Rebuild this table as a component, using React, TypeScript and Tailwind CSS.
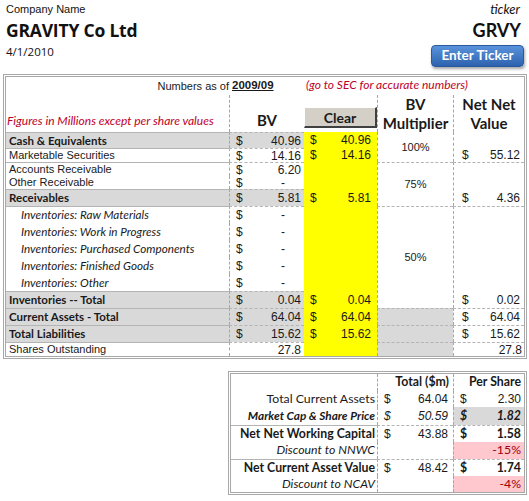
import React from 'react';

const arial = "font-['Liberation_Sans',Arial,sans-serif]";
const cal = "font-['Lato','Open_Sans',sans-serif]";

type Row = {
    pos: string;
    label: string;
    kind: 'bold' | 'plain' | 'inv';
    bv: string;
    line: boolean;
};

const rows: Row[] = [
    { pos: 'row-start-3', label: 'Cash & Equivalents', kind: 'bold', bv: '40.96', line: true },
    { pos: 'row-start-4', label: 'Marketable Securities', kind: 'plain', bv: '14.16', line: true },
    { pos: 'row-start-5', label: 'Accounts Receivable', kind: 'plain', bv: '6.20', line: true },
    { pos: 'row-start-6', label: 'Other Receivable', kind: 'plain', bv: '-', line: false },
    { pos: 'row-start-7', label: 'Receivables', kind: 'bold', bv: '5.81', line: true },
    { pos: 'row-start-8', label: 'Inventories: Raw Materials', kind: 'inv', bv: '-', line: true },
    { pos: 'row-start-9', label: 'Inventories: Work in Progress', kind: 'inv', bv: '-', line: false },
    { pos: 'row-start-10', label: 'Inventories: Purchased Components', kind: 'inv', bv: '-', line: false },
    { pos: 'row-start-11', label: 'Inventories: Finished Goods', kind: 'inv', bv: '-', line: false },
    { pos: 'row-start-12', label: 'Inventories: Other', kind: 'inv', bv: '-', line: false },
    { pos: 'row-start-13', label: 'Inventories -- Total', kind: 'bold', bv: '0.04', line: true },
    { pos: 'row-start-14', label: 'Current Assets - Total', kind: 'bold', bv: '64.04', line: true },
    { pos: 'row-start-15', label: 'Total Liabilities', kind: 'bold', bv: '15.62', line: true },
];

// "$" on the left, amount on the right, like Excel's accounting format
function Money({ v, cls }: { v: string; cls: string }) {
    return (
        <div className={`flex items-center justify-between ${cls}`}>
            <span>$</span>
            <span className={v === '-' ? 'pr-[16px]' : ''}>{v}</span>
        </div>
    );
}

function Header() {
    return (
        <div className="h-[74px] flex justify-between px-[6px] pt-[1px] text-[#111]">
            <div>
                <div className={`text-[11px] leading-[16px] ${arial}`}>Company Name</div>
                <div className="text-[17.5px] leading-[26px] font-bold tracking-[-0.2px] font-['Open_Sans',sans-serif]">GRAVITY Co Ltd</div>
                <div className="text-[11.5px] leading-[16px] mt-[1px] font-['Open_Sans',sans-serif]">4/1/2010</div>
            </div>
            <div className={`flex flex-col items-end ${cal} pr-[2px]`}>
                <div className="text-[13px] leading-[16px] italic pr-[1px]">ticker</div>
                <div className="text-[18px] leading-[26px] font-bold">GRVY</div>
                <button className="mt-[2px] mr-[-3px] h-[22px] w-[93px] rounded-[4px] border border-[#2a5a9e] bg-gradient-to-b from-[#5a93dc] to-[#2e62ae] text-white text-[13.5px] font-bold leading-none shadow-[1px_2px_3px_rgba(0,0,0,0.35)]">
                    Enter Ticker
                </button>
            </div>
        </div>
    );
}

function MainTable() {
    return (
        <div className="ml-[3px] w-[524px] border-[3px] border-double border-[#a8a8a8] text-[#1a1a1a]">
            <div className="grid grid-cols-[223px_75px_73px_76px_71px] grid-rows-[18px_37px_16px_14px_14px_13px_17px_17px_17px_17px_17px_17px_17px_17px_17px_14px]">
                {/* title row */}
                <div className={`col-start-1 row-start-1 flex items-end justify-end pb-[1px] text-[11px] ${arial}`}>Numbers as of</div>
                <div className={`col-start-2 row-start-1 flex items-end pl-[3px] pb-[1px] text-[11.5px] font-bold underline ${arial}`}>2009/09</div>
                <div className={`col-start-3 col-span-3 row-start-1 flex items-end pl-[2px] pb-[1px] text-[12px] italic text-[#c0002a] ${cal}`}>
                    (go to SEC for accurate numbers)
                </div>

                {/* column headers */}
                <div className={`col-start-1 row-start-2 flex items-end pb-[2px] pl-[1px] text-[12px] italic text-[#c0002a] ${cal}`}>
                    Figures in Millions except per share values
                </div>
                <div className={`col-start-2 row-start-2 flex items-end justify-center pb-[1px] border-l border-dashed border-[#a6a6a6] text-[15px] font-bold ${cal}`}>BV</div>
                <div className="col-start-3 row-start-2 pt-[12px]">
                    <div className={`h-[21px] flex items-center justify-center bg-[#d4d0c8] border-t border-l border-t-white border-l-white border-r-2 border-b-2 border-r-[#404040] border-b-[#404040] text-[14px] font-bold ${cal}`}>
                        Clear
                    </div>
                </div>
                <div className={`col-start-4 row-start-2 flex flex-col items-center justify-center border-l border-dashed border-[#a6a6a6] text-[15px] leading-[19px] font-bold ${cal}`}>
                    <span>BV</span>
                    <span>Multiplier</span>
                </div>
                <div className={`col-start-5 row-start-2 flex flex-col items-center justify-center border-l border-dashed border-[#a6a6a6] text-[15px] leading-[19px] font-bold ${cal}`}>
                    <span>Net Net</span>
                    <span>Value</span>
                </div>

                {/* labels and BV */}
                {rows.map(row => (
                    <React.Fragment key={row.label}>
                        <div
                            className={`col-start-1 ${row.pos} flex items-center ${row.line ? 'border-t border-[#b4b4b4]' : ''} ${
                                row.kind === 'bold'
                                    ? `bg-[#d9d9d9] pl-[3px] text-[11.5px] font-bold ${cal}`
                                    : row.kind === 'inv'
                                    ? `pl-[15px] text-[11.7px] italic ${cal}`
                                    : `pl-[3px] text-[11px] ${arial}`
                            }`}
                        >
                            {row.label}
                        </div>
                        <div
                            className={`col-start-2 ${row.pos} border-l border-dashed border-[#a6a6a6] ${row.line ? 'border-t border-t-[#b4b4b4] border-t-solid' : ''} ${
                                row.kind === 'bold' ? 'bg-[#d9d9d9]' : ''
                            }`}
                        >
                            <Money v={row.bv} cls={`h-full pl-[6px] pr-[3px] text-[12px] ${arial}`} />
                        </div>
                    </React.Fragment>
                ))}
                <div className={`col-start-1 row-start-16 flex items-center pl-[3px] border-t border-[#b4b4b4] text-[11px] ${arial}`}>Shares Outstanding</div>
                <div className={`col-start-2 row-start-16 flex items-center justify-end pr-[3px] border-l border-dashed border-[#a6a6a6] border-t border-t-[#b4b4b4] text-[12px] ${arial}`}>27.8</div>

                {/* yellow "Clear" column */}
                <div className="col-start-3 row-start-3 row-span-14 bg-[#ffff00]" />
                <Money v="40.96" cls={`col-start-3 row-start-3 pl-[6px] pr-[6px] text-[12px] ${arial}`} />
                <Money v="14.16" cls={`col-start-3 row-start-4 pl-[6px] pr-[6px] text-[12px] ${arial}`} />
                <Money v="5.81" cls={`col-start-3 row-start-7 pl-[6px] pr-[6px] text-[12px] ${arial}`} />
                <Money v="0.04" cls={`col-start-3 row-start-13 pl-[6px] pr-[6px] text-[12px] ${arial}`} />
                <Money v="64.04" cls={`col-start-3 row-start-14 pl-[6px] pr-[6px] text-[12px] ${arial}`} />
                <Money v="15.62" cls={`col-start-3 row-start-15 pl-[6px] pr-[6px] text-[12px] ${arial}`} />

                {/* BV multiplier */}
                <div className={`col-start-4 row-start-3 row-span-2 flex items-center justify-center border-l border-dashed border-[#a6a6a6] text-[11px] ${arial}`}>100%</div>
                <div className={`col-start-4 row-start-5 row-span-3 flex items-center justify-center border-l border-dashed border-[#a6a6a6] border-t border-t-[#b4b4b4] text-[11px] ${arial}`}>75%</div>
                <div className={`col-start-4 row-start-8 row-span-6 flex items-center justify-center border-l border-dashed border-[#a6a6a6] border-t border-t-[#b4b4b4] text-[11px] ${arial}`}>50%</div>
                <div className="col-start-4 row-start-14 bg-[#d9d9d9] border-l border-dashed border-[#a6a6a6] border-t border-t-[#b4b4b4]" />
                <div className="col-start-4 row-start-15 bg-[#d9d9d9] border-l border-dashed border-[#a6a6a6] border-t border-t-[#b4b4b4]" />
                <div className="col-start-4 row-start-16 bg-[#d9d9d9] border-l border-dashed border-[#a6a6a6] border-t border-t-[#b4b4b4]" />

                {/* net net value */}
                <div className="col-start-5 row-start-3 row-span-2 flex items-end border-l border-dashed border-[#a6a6a6]">
                    <Money v="55.12" cls={`w-full h-[14px] pl-[8px] pr-[4px] text-[12px] ${arial}`} />
                </div>
                <div className="col-start-5 row-start-5 row-span-3 flex items-end border-l border-dashed border-[#a6a6a6] border-t border-t-[#b4b4b4]">
                    <Money v="4.36" cls={`w-full h-[17px] pl-[8px] pr-[4px] text-[12px] ${arial}`} />
                </div>
                <div className="col-start-5 row-start-8 row-span-6 flex items-end border-l border-dashed border-[#a6a6a6] border-t border-t-[#b4b4b4]">
                    <Money v="0.02" cls={`w-full h-[17px] pl-[8px] pr-[4px] text-[12px] ${arial}`} />
                </div>
                <div className="col-start-5 row-start-14 border-l border-dashed border-[#a6a6a6] border-t border-t-[#b4b4b4]">
                    <Money v="64.04" cls={`h-full pl-[8px] pr-[4px] text-[12px] ${arial}`} />
                </div>
                <div className="col-start-5 row-start-15 border-l border-dashed border-[#a6a6a6] border-t border-t-[#b4b4b4]">
                    <Money v="15.62" cls={`h-full pl-[8px] pr-[4px] text-[12px] ${arial}`} />
                </div>
                <div className={`col-start-5 row-start-16 flex items-center justify-end pr-[2px] border-l border-dashed border-[#a6a6a6] border-t border-t-[#b4b4b4] text-[12px] ${arial}`}>27.8</div>
            </div>
        </div>
    );
}

function Summary() {
    const cell = 'border-l border-dashed border-[#a6a6a6]';
    return (
        <div className={`ml-[228px] mt-[12px] w-[299px] border-[3px] border-double border-[#a8a8a8] text-[#1a1a1a] ${cal} text-[12.3px]`}>
            <div className="grid grid-cols-[146px_76px_71px] grid-rows-[17px_16px_18px_17px_17px_17px_16px]">
                <div className="col-start-1 row-start-1" />
                <div className={`col-start-2 row-start-1 flex items-center justify-end pr-[4px] font-bold ${cell}`}>Total ($m)</div>
                <div className={`col-start-3 row-start-1 flex items-center justify-end pr-[3px] font-bold ${cell}`}>Per Share</div>

                <div className="col-start-1 row-start-2 flex items-center justify-end pr-[2px]">Total Current Assets</div>
                <div className={`col-start-2 row-start-2 ${cell}`}><Money v="64.04" cls={`h-full pl-[6px] pr-[5px] text-[12px] ${arial}`} /></div>
                <div className={`col-start-3 row-start-2 ${cell}`}><Money v="2.30" cls={`h-full pl-[6px] pr-[3px] text-[12px] ${arial}`} /></div>

                <div className="col-start-1 row-start-3 flex items-center justify-end pr-[2px] font-bold italic text-[11.8px]">Market Cap &amp; Share Price</div>
                <div className={`col-start-2 row-start-3 ${cell}`}><Money v="50.59" cls={`h-full pl-[6px] pr-[5px] text-[12px] italic ${arial}`} /></div>
                <div className={`col-start-3 row-start-3 bg-[#d9d9d9] ${cell}`}><Money v="1.82" cls="h-full pl-[6px] pr-[3px] font-bold italic" /></div>

                <div className="col-start-1 row-start-4 flex items-center justify-end pr-[2px] font-bold border-t border-[#b4b4b4]">Net Net Working Capital</div>
                <div className={`col-start-2 row-start-4 ${cell} border-t border-t-[#b4b4b4]`}><Money v="43.88" cls={`h-full pl-[6px] pr-[5px] text-[12px] ${arial}`} /></div>
                <div className={`col-start-3 row-start-4 ${cell} border-t border-t-[#b4b4b4]`}><Money v="1.58" cls="h-full pl-[6px] pr-[3px] font-bold" /></div>

                <div className="col-start-1 row-start-5 flex items-center justify-end pr-[2px] italic">Discount to NNWC</div>
                <div className={`col-start-2 row-start-5 ${cell}`} />
                <div className={`col-start-3 row-start-5 flex items-center justify-end pr-[3px] bg-[#ffc7ce] text-[#9c0006] ${cell}`}>-15%</div>

                <div className="col-start-1 row-start-6 flex items-center justify-end pr-[2px] font-bold border-t border-[#b4b4b4]">Net Current Asset Value</div>
                <div className={`col-start-2 row-start-6 ${cell} border-t border-t-[#b4b4b4]`}><Money v="48.42" cls={`h-full pl-[6px] pr-[5px] text-[12px] ${arial}`} /></div>
                <div className={`col-start-3 row-start-6 ${cell} border-t border-t-[#b4b4b4]`}><Money v="1.74" cls="h-full pl-[6px] pr-[3px] font-bold" /></div>

                <div className="col-start-1 row-start-7 flex items-center justify-end pr-[2px] italic">Discount to NCAV</div>
                <div className={`col-start-2 row-start-7 ${cell}`} />
                <div className={`col-start-3 row-start-7 flex items-center justify-end pr-[3px] bg-[#ffc7ce] text-[#9c0006] ${cell}`}>-4%</div>
            </div>
        </div>
    );
}

export default function App() {
    return (
        <div className="w-[529px] h-[501px] bg-white overflow-hidden">
            <Header />
            <MainTable />
            <Summary />
        </div>
    );
}
